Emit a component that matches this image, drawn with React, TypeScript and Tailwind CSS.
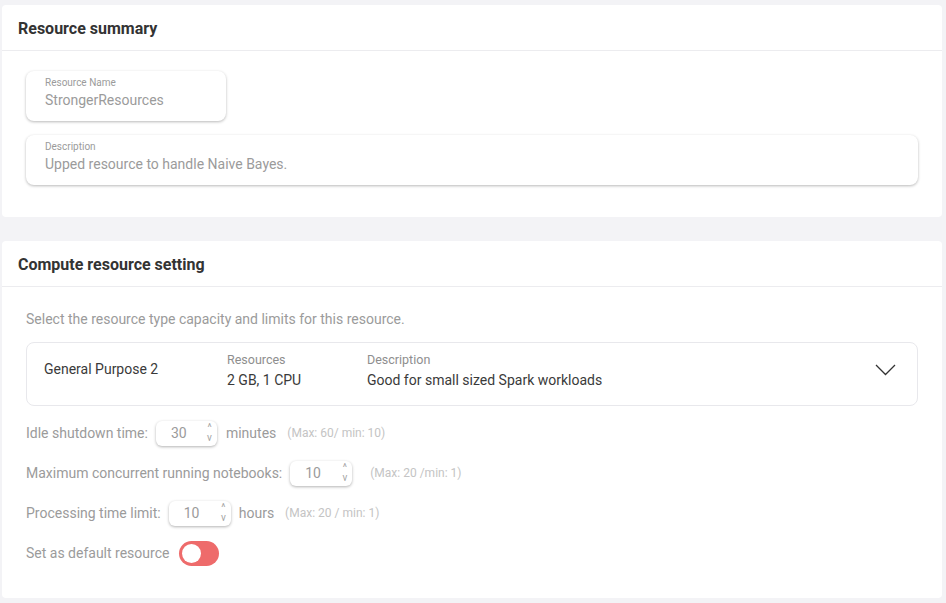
function Field({ label, value, className = '' }: { label: string; value: string; className?: string }) {
  return (
    <div className={`h-[50px] rounded-[8px] bg-white pl-[19px] pt-[5px] shadow-[0_1px_3px_rgba(0,0,0,0.28)] ${className}`}>
      <div className="text-[10px] leading-[14px] text-[#9b9b9b]">{label}</div>
      <div className="text-[14px] leading-[20px] text-[#9b9b9b]">{value}</div>
    </div>
  );
}

function NumberBox({ value, width }: { value: string; width: string }) {
  return (
    <div className={`relative flex h-[25px] items-center rounded-[6px] bg-white shadow-[0_1px_3px_rgba(0,0,0,0.3)] ${width}`}>
      <span className="pl-[15px] text-[14px] text-[#9b9b9b]">{value}</span>
      <div className="absolute right-[5px] top-[2px] flex flex-col items-center text-[10px] leading-[10px] text-[#a5a5a5]">
        <span>^</span>
        <span>v</span>
      </div>
    </div>
  );
}

function Card({ title, children }: { title: string; children: React.ReactNode }) {
  return (
    <div className="rounded-[4px] bg-white">
      <div className="flex h-[46px] items-center border-b border-[#ececef] px-4 pt-[2px]">
        <h2 className="text-[16px] font-bold text-[#333]">{title}</h2>
      </div>
      {children}
    </div>
  );
}

export default function App() {
  return (
    <div className="min-h-[603px] bg-[#f3f3f6] pb-[5px] pl-[2px] pr-[4px] pt-[5px] font-['Roboto',sans-serif]">
      <Card title="Resource summary">
        <div className="flex flex-col gap-[14px] px-6 pb-[32px] pt-[20px]">
          <Field label="Resource Name" value="StrongerResources" className="w-[200px]" />
          <Field label="Description" value="Upped resource to handle Naive Bayes." />
        </div>
      </Card>

      <div className="mt-[24px]">
        <Card title="Compute resource setting">
          <div className="px-6 pb-[32px] pt-[22px] text-[14px]">
            <p className="leading-[20px] text-[#9b9b9b]">Select the resource type capacity and limits for this resource.</p>

            <div className="mt-[13px] flex h-[64px] items-start rounded-[8px] border border-[#e8e8ec] pl-[17px] pr-[21px] pt-[9px]">
              <div className="mt-[7px] w-[183px] leading-[20px] text-[#3a3a3a]">General Purpose 2</div>
              <div className="flex w-[140px] flex-col gap-[2px]">
                <span className="text-[12.5px] leading-[16px] text-[#8e8e8e]">Resources</span>
                <span className="leading-[20px] text-[#3a3a3a]">2 GB, 1 CPU</span>
              </div>
              <div className="flex flex-1 flex-col gap-[2px]">
                <span className="text-[12.5px] leading-[16px] text-[#8e8e8e]">Description</span>
                <span className="leading-[20px] text-[#3a3a3a]">Good for small sized Spark workloads</span>
              </div>
              <svg width="21" height="12" viewBox="0 0 21 12" className="mt-[12px]" fill="none">
                <polyline points="1,1 10.5,10.5 20,1" stroke="#333" strokeWidth="1.3" />
              </svg>
            </div>

            <div className="mt-[14px] flex flex-col gap-[14px] text-[#9b9b9b]">
              <div className="flex h-[26px] items-center">
                <span>Idle shutdown time:</span>
                <div className="ml-[8px]"><NumberBox value="30" width="w-[61px]" /></div>
                <span className="ml-[9px]">minutes</span>
                <span className="ml-[11px] text-[12px] text-[#c4c4c4]">(Max: 60/ min: 10)</span>
              </div>
              <div className="flex h-[26px] items-center">
                <span>Maximum concurrent running notebooks:</span>
                <div className="ml-[8px]"><NumberBox value="10" width="w-[62px]" /></div>
                <span className="ml-[18px] text-[12px] text-[#c4c4c4]">(Max: 20 /min: 1)</span>
              </div>
              <div className="flex h-[26px] items-center">
                <span>Processing time limit:</span>
                <div className="ml-[8px]"><NumberBox value="10" width="w-[62px]" /></div>
                <span className="ml-[8px]">hours</span>
                <span className="ml-[11px] text-[12px] text-[#c4c4c4]">(Max: 20 / min: 1)</span>
              </div>
              <div className="flex h-[26px] items-center">
                <span>Set as default resource</span>
                <div className="ml-[10px] flex h-[25px] w-[40px] items-center rounded-full bg-[#ee6b6b] pl-[3px]">
                  <div className="h-[19px] w-[19px] rounded-full bg-white" />
                </div>
              </div>
            </div>
          </div>
        </Card>
      </div>
    </div>
  );
}
